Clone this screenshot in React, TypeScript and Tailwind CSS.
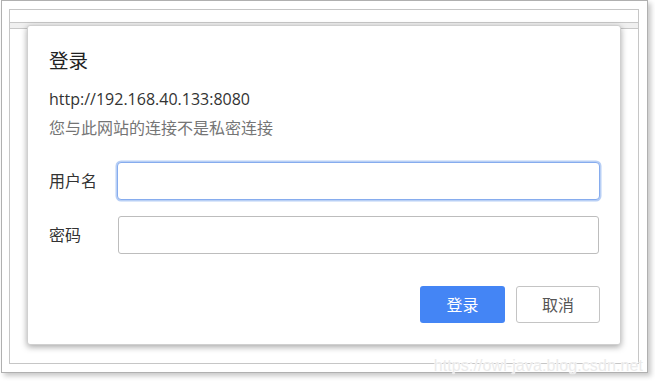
import React from "react";

export default function App() {
  const font = { fontFamily: '"Open Sans", "Noto Sans CJK SC", sans-serif' };
  return (
    <div className="relative w-[655px] h-[381px] bg-white overflow-hidden" style={font}>
      <div className="ml-[1px] w-[647px] h-[373px] border border-[#b0b0b0] shadow-[3px_3px_5px_rgba(0,0,0,0.22)] pt-[8px] pl-[7px] bg-white">
        <div className="w-[630px] h-[355px] border border-[#c6c6c6] bg-white">
          <div className="h-[12px]" />
          <div className="h-[7px] border-y border-[#c8c8c8] bg-[#f0f0f0]" />
        </div>
      </div>

      <div className="absolute left-[27px] top-[25px] w-[594px] h-[320px] bg-white rounded-[3px] border border-[#d0d0d0] shadow-[0_2px_6px_rgba(0,0,0,0.35)] pl-[21px] pr-[20px] pt-[22px] flex flex-col">
        <div className="text-[19.5px] leading-[26px] text-[#222]">登录</div>
        <div className="mt-[14px] text-[16px] leading-[22px] text-[#333]">http://192.168.40.133:8080</div>
        <div className="mt-[7px] text-[16px] leading-[22px] text-[#757575]">您与此网站的连接不是私密连接</div>

        <div className="mt-[23px] flex items-center">
          <div className="w-[68px] text-[16px] text-[#333]">用户名</div>
          <div className="w-[483px] h-[38px] rounded-[4px] border border-[#86acee] shadow-[0_0_0_1.5px_#b8cff5] bg-white" />
        </div>
        <div className="mt-[16px] flex items-center">
          <div className="w-[69px] text-[16px] text-[#333]">密码</div>
          <div className="w-[481px] h-[38px] rounded-[3px] border border-[#bdbdbd] bg-white" />
        </div>

        <div className="mt-[32px] flex justify-end gap-[11px]">
          <div className="w-[85px] h-[37px] rounded-[3px] bg-[#4485f5] text-white text-[16px] flex items-center justify-center">登录</div>
          <div className="w-[84px] h-[37px] rounded-[3px] border border-[#c4c4c4] bg-white text-[#555] text-[16px] flex items-center justify-center">取消</div>
        </div>
      </div>

      <div
        className="absolute right-[12px] top-[354px] text-[16px] text-[#ebebeb] tracking-[0.1px]"
        style={{ fontFamily: '"Liberation Sans", Arial, sans-serif', textShadow: "0 0 1px #fff, 0 0 1px #fff" }}
      >
        https://owl-java.blog.csdn.net
      </div>
    </div>
  );
}
